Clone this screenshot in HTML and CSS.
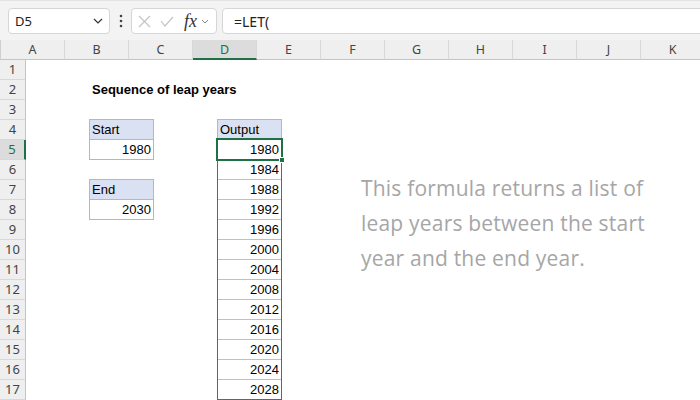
FILE: index.html
```html
<!DOCTYPE html>
<html lang="en">
<head>
    <meta charset="UTF-8">
    <title>Sequence of leap years</title>
    <link rel="stylesheet" href="styles.css">
</head>
<body>
    <!-- Formula bar -->
    <div class="toolbar">
        <div class="namebox">
            <span>D5</span>
            <svg class="chev" width="10" height="6" viewBox="0 0 10 6"><polyline points="1,1 5,5 9,1" fill="none" stroke="#333" stroke-width="1.2"/></svg>
        </div>
        <svg class="dots" width="4" height="14" viewBox="0 0 4 14"><circle cx="2" cy="2" r="1.3" fill="#444"/><circle cx="2" cy="7" r="1.3" fill="#444"/><circle cx="2" cy="12" r="1.3" fill="#444"/></svg>
        <div class="fxbox">
            <svg class="cancel" width="13" height="13" viewBox="0 0 13 13"><path d="M1 1L12 12M12 1L1 12" stroke="#c4c4c4" stroke-width="1.2"/></svg>
            <svg class="enter" width="14" height="11" viewBox="0 0 14 11"><polyline points="1,5 5,10 13,1" fill="none" stroke="#c4c4c4" stroke-width="1.2"/></svg>
            <span class="fx">fx</span>
            <svg class="chev-sm" width="8" height="5" viewBox="0 0 8 5"><polyline points="1,1 4,4 7,1" fill="none" stroke="#888" stroke-width="1"/></svg>
        </div>
        <div class="formula">=LET(</div>
    </div>

    <!-- Worksheet -->
    <div class="sheet">
        <div class="colheads">
            <div class="corner"><span class="tri"></span></div>
            <div class="colhead">A</div>
            <div class="colhead">B</div>
            <div class="colhead">C</div>
            <div class="colhead current">D</div>
            <div class="colhead">E</div>
            <div class="colhead">F</div>
            <div class="colhead">G</div>
            <div class="colhead">H</div>
            <div class="colhead">I</div>
            <div class="colhead">J</div>
            <div class="colhead">K</div>
        </div>
        <div class="body">
            <div class="rowheads">
                <div class="rowhead">1</div>
                <div class="rowhead">2</div>
                <div class="rowhead">3</div>
                <div class="rowhead">4</div>
                <div class="rowhead current">5</div>
                <div class="rowhead">6</div>
                <div class="rowhead">7</div>
                <div class="rowhead">8</div>
                <div class="rowhead">9</div>
                <div class="rowhead">10</div>
                <div class="rowhead">11</div>
                <div class="rowhead">12</div>
                <div class="rowhead">13</div>
                <div class="rowhead">14</div>
                <div class="rowhead">15</div>
                <div class="rowhead">16</div>
                <div class="rowhead">17</div>
            </div>
            <div class="cells">
                <div class="title">Sequence of leap years</div>

                <div class="box start">
                    <div class="hdr">Start</div>
                    <div class="val">1980</div>
                </div>

                <div class="box end">
                    <div class="hdr">End</div>
                    <div class="val">2030</div>
                </div>

                <div class="output">
                    <div class="hdr">Output</div>
                    <div class="spill">
                        <div class="val">1980</div>
                        <div class="val">1984</div>
                        <div class="val">1988</div>
                        <div class="val">1992</div>
                        <div class="val">1996</div>
                        <div class="val">2000</div>
                        <div class="val">2004</div>
                        <div class="val">2008</div>
                        <div class="val">2012</div>
                        <div class="val">2016</div>
                        <div class="val">2020</div>
                        <div class="val">2024</div>
                        <div class="val">2028</div>
                    </div>
                </div>

                <div class="note">This formula returns a list of leap years between the start year and the end year.</div>

                <!-- active cell D5 -->
                <div class="selection"><span class="handle"></span></div>
            </div>
        </div>
    </div>
</body>
</html>
```

FILE: styles.css
```css
/* Page */
body {
    margin: 0;
    width: 700px;
    height: 400px;
    overflow: hidden;
    background: #fff;
    font-family: "Liberation Sans", Arial, sans-serif;
    color: #000;
}

/* Formula bar */
.toolbar {
    height: 40px;
    box-sizing: border-box;
    display: flex;
    align-items: flex-start;
    padding: 7px 0 0 8px;
    background: #f3f3f3;
    border-top: 1px solid #e4e4e4;
    font-family: "Noto Sans", sans-serif;
    font-size: 13px;
    color: #222;
}
.namebox,
.fxbox,
.formula {
    height: 26px;
    box-sizing: border-box;
    background: #fff;
    border: 1px solid #d6d6d6;
    border-radius: 4px;
    display: flex;
    align-items: center;
}
.namebox {
    width: 102px;
    padding: 0 6px 0 6px;
    justify-content: space-between;
}
.dots {
    margin: 6px 8px 0 9px;
}
.fxbox {
    width: 86px;
    padding-left: 6px;
}
.enter {
    margin-left: 9px;
}
.fx {
    margin-left: 10px;
    font-family: "Liberation Serif", serif;
    font-style: italic;
    font-size: 18px;
    color: #333;
    line-height: 1;
}
.chev-sm {
    margin-left: 4px;
}
.formula {
    flex: 1;
    margin-left: 5px;
    margin-right: -10px;
    padding-left: 11px;
    font-size: 14px;
}

/* Headers */
.colheads {
    display: flex;
    height: 20px;
}
.corner {
    width: 26px;
    box-sizing: border-box;
    background: #efefef;
    border-right: 1px solid #d0d0d0;
    border-bottom: 1px solid #c4c4c4;
    position: relative;
}
.tri {
    position: absolute;
    right: 3px;
    bottom: 2px;
    width: 0;
    height: 0;
    border-left: 11px solid transparent;
    border-bottom: 11px solid #d8d8d8;
}
.colhead {
    width: 64px;
    flex-shrink: 0;
    box-sizing: border-box;
    background: #efefef;
    border-right: 1px solid #d8d8d8;
    border-bottom: 1px solid #c4c4c4;
    text-align: center;
    line-height: 19px;
    font-family: "Noto Sans", sans-serif;
    font-size: 12.5px;
    color: #444;
}
.colhead.current {
    background: #dcdcdc;
    color: #1e7145;
    border-bottom: 2px solid #1e7145;
}
.body {
    display: flex;
}
.rowheads {
    width: 26px;
    flex-shrink: 0;
}
.rowhead {
    height: 20px;
    box-sizing: border-box;
    background: #efefef;
    border-right: 1px solid #c4c4c4;
    border-bottom: 1px solid #d8d8d8;
    text-align: center;
    line-height: 19px;
    font-family: "Noto Sans", sans-serif;
    font-size: 13px;
    color: #444;
}
.rowhead.current {
    background: #dcdcdc;
    color: #1e7145;
    border-right: 2px solid #1e7145;
}

/* Cell area */
.cells {
    position: relative;
    display: grid;
    grid-template-columns: repeat(11, 64px);
    grid-template-rows: repeat(17, 20px);
    font-size: 13px;
}
.title {
    grid-column: 2 / 5;
    grid-row: 2;
    padding-left: 2px;
    line-height: 20px;
    font-weight: bold;
}
.box {
    grid-column: 2;
    margin: -1px 0 0 -1px;
    border: 1px solid #b7b7b7;
}
.start {
    grid-row: 4 / 6;
}
.end {
    grid-row: 7 / 9;
}
.hdr {
    height: 20px;
    box-sizing: border-box;
    padding-left: 2px;
    line-height: 19px;
    background: #d9e1f2;
    border-bottom: 1px solid #b7b7b7;
}
.val {
    height: 19px;
    line-height: 19px;
    text-align: right;
    padding-right: 2px;
}
.output {
    grid-column: 4;
    grid-row: 4 / 18;
    margin: -1px 0 0 -1px;
}
.output .hdr {
    height: 21px;
    border: 1px solid #b7b7b7;
}
.spill {
    border: 1px solid #3d68b5;
    border-top: none;
}
.spill .val {
    height: 20px;
    box-sizing: border-box;
    border-bottom: 1px solid #c0c0c0;
}
.spill .val:last-child {
    border-bottom: none;
    height: 19px;
}
.note {
    grid-column: 6 / 11;
    grid-row: 6 / 13;
    padding: 11px 0 0 15px;
    font-family: "Open Sans", sans-serif;
    font-size: 21px;
    letter-spacing: 0.2px;
    line-height: 35px;
    color: #a6a6a6;
}

/* Active cell */
.selection {
    position: absolute;
    left: 190px;
    top: 78px;
    width: 67px;
    height: 23px;
    box-sizing: border-box;
    border: 2px solid #1e7145;
}
.handle {
    position: absolute;
    right: -4px;
    bottom: -4px;
    width: 4px;
    height: 4px;
    background: #1e7145;
    border: 1px solid #fff;
}
```
